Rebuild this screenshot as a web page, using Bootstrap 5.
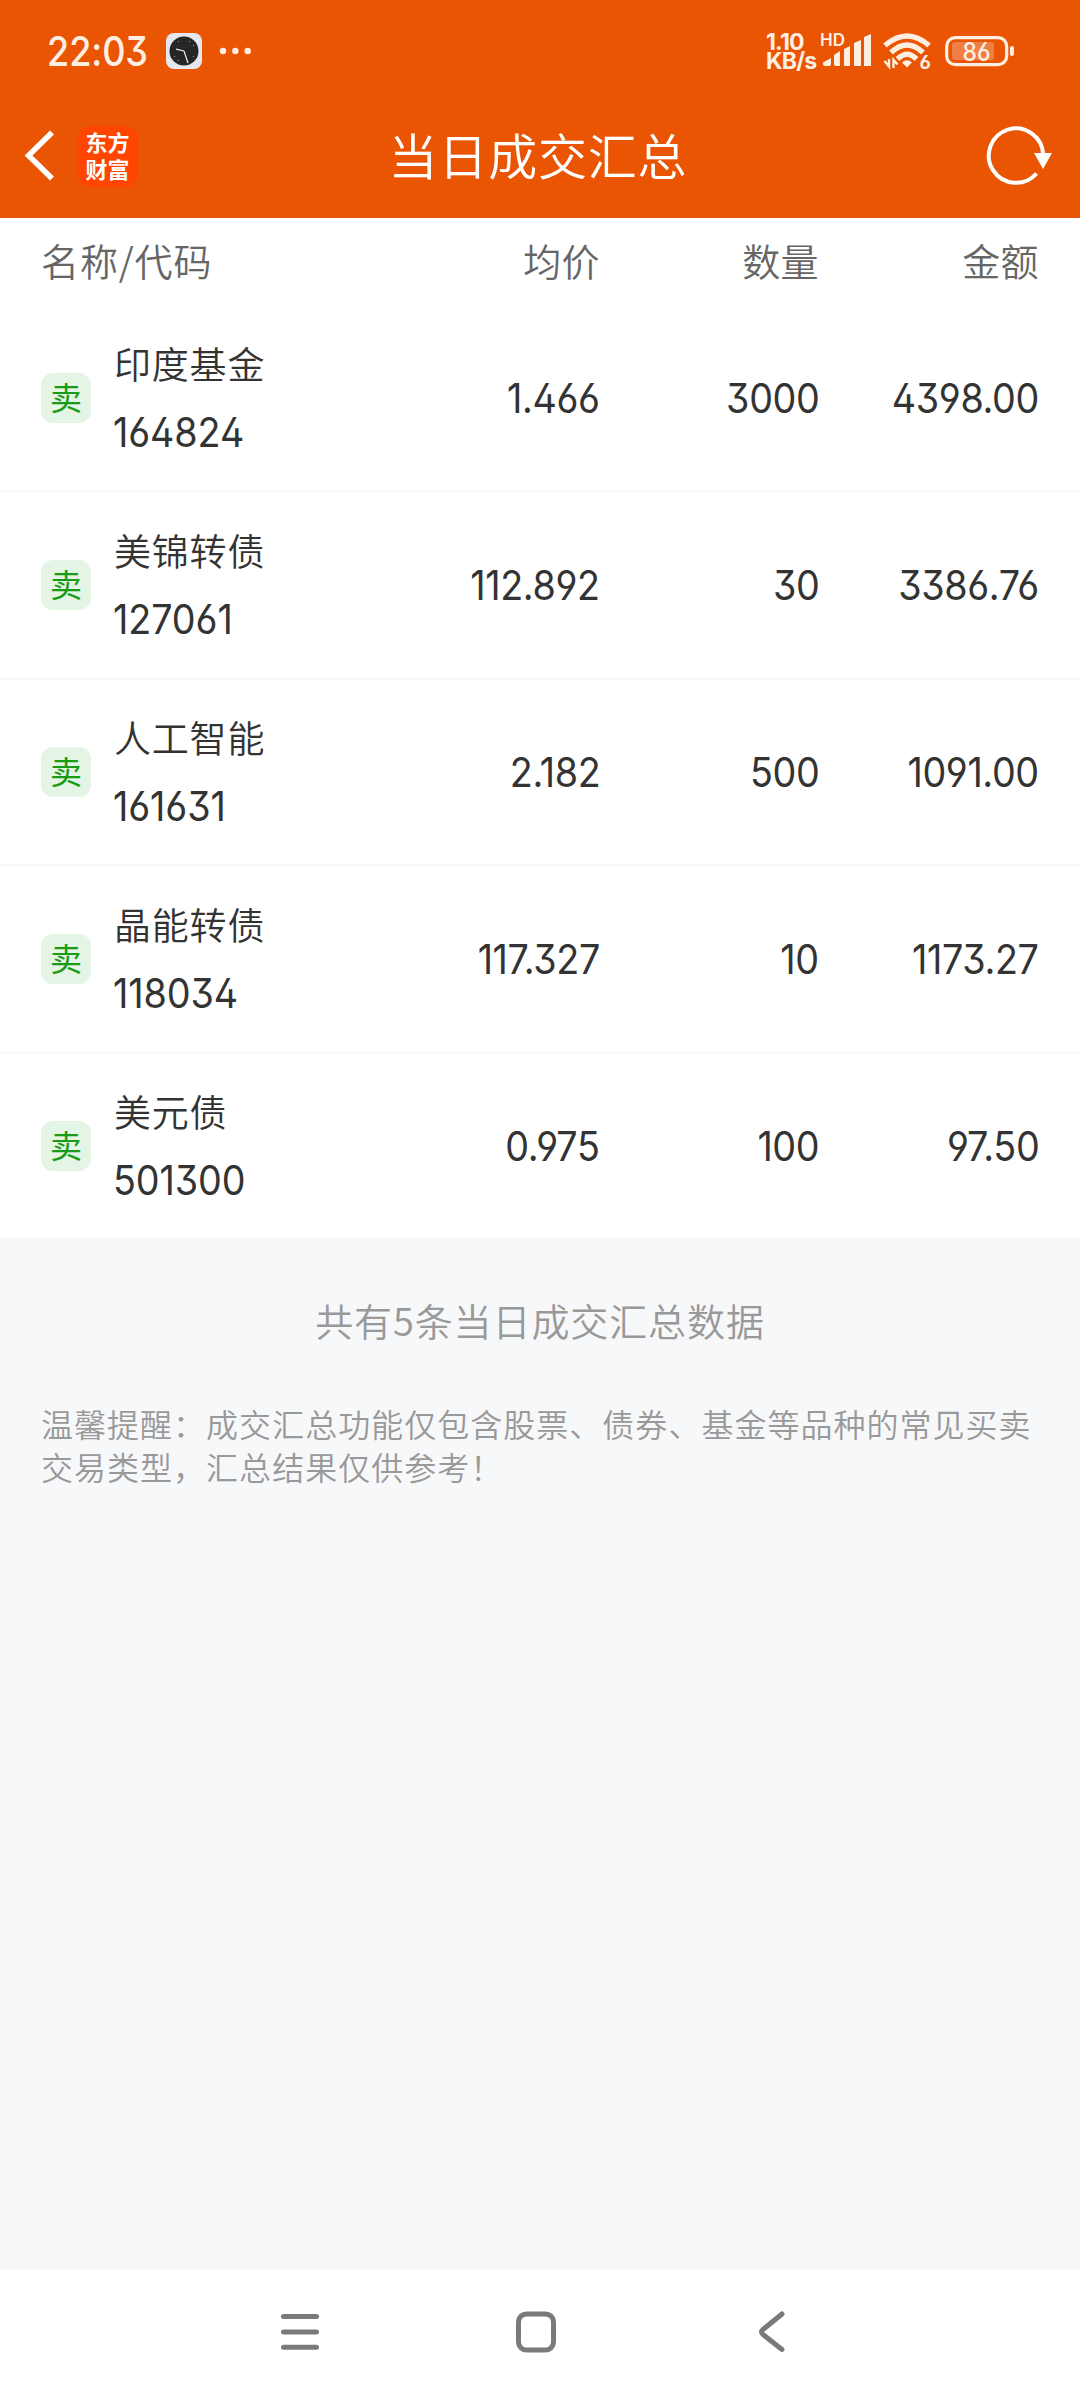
<!DOCTYPE html>
<html lang="zh-CN">
<head>
<meta charset="utf-8">
<meta name="viewport" content="width=device-width, initial-scale=1">
<title>当日成交汇总</title>
<link href="https://cdn.jsdelivr.net/npm/bootstrap@5.3.0/dist/css/bootstrap.min.css" rel="stylesheet">
<style>
  body { font-family: Inter, "Noto Sans CJK SC", sans-serif; font-feature-settings: "ss01", "cv09"; background: #f7f8fa; color: #333; height: 2400px; }
  .cjk { font-family: "Noto Sans CJK SC", sans-serif; font-weight: 350; }
  .app-head { background: #ea5504; height: 218px; color: #fff; }
  .status-bar { height: 102px; padding: 0 64px 0 47px; color: #ffeee2; }
  .clock-text { font-size: 41px; line-height: 60px; font-weight: 500; width: 98px; }
  .squeeze { display: inline-block; transform: scaleX(.92); transform-origin: 0 50%; letter-spacing: -.1px; white-space: nowrap; }
  .squeeze-end { transform-origin: 100% 50%; letter-spacing: -.4px; }
  .clock-text .squeeze { transform: scaleX(.88); }
  .clock-app { margin-left: 21px; }
  .net-speed { font-size: 23px; font-weight: 700; line-height: 19px; width: 54px; padding-top: 2px; }
  .net-speed div { letter-spacing: -.8px; }
  .battery { margin-left: 12px; }
  .title-bar { height: 116px; padding: 0 28px 8px 24px; }
  .page-title { font-size: 49px; letter-spacing: .8px; line-height: 60px; padding-bottom: 5px; }
  .brand-mark { width: 61px; height: 61px; margin-left: 21px; padding-bottom: 3px; border-radius: 14px; background: #ff4500; font-family: "Noto Sans CJK SC", sans-serif; font-size: 22px; font-weight: 700; line-height: 27px; }
  .side { width: 120px; }
  .cols { display: grid; grid-template-columns: 360px 199px 219px 220px; padding: 0 41px; align-items: center; }
  .cols-head { height: 88px; font-size: 38px; color: #666; letter-spacing: .4px; padding-bottom: 6px; }
  .cols-head div:first-child { letter-spacing: .9px; }
  .deal { height: 187px; border-bottom: 3px solid #f8f9f9; font-size: 41px; }
  .deal:last-child { height: 184px; border-bottom: 0; }
  .deal > .text-end { padding-top: 2px; }
  .deal-name { font-size: 37px; letter-spacing: .8px; line-height: 64px; padding-bottom: 3px; }
  .deal-code { line-height: 66px; padding-top: 1px; margin-left: -1px; }
  .sell-tag { width: 50px; height: 50px; border-radius: 12px; background: #e4f5e5; color: #189c18; font-size: 32px; font-weight: 400; line-height: 46px; margin-right: 23px; }
  .summary { margin-top: 52px; font-size: 38px; letter-spacing: .9px; line-height: 60px; color: #999; }
  .tip { margin: 52px 38px 0 41px; font-size: 32px; letter-spacing: 1.02px; line-height: 43px; color: #999; }
  .nav-keys { height: 130px; }
  .nav-keys svg { margin-left: -14px; margin-bottom: 6px; }
</style>
</head>
<body class="d-flex flex-column m-0">
<header class="app-head">
  <div class="status-bar d-flex align-items-center">
    <div class="clock-text"><span class="squeeze">22:03</span></div>
    <svg class="clock-app" width="36" height="36" viewBox="0 0 36 36">
      <rect width="36" height="36" rx="8" fill="#e4e7ee"/>
      <circle cx="18" cy="18" r="14.5" fill="#262626"/>
      <path d="M18 18 10 16.2M18 18 22 30" stroke="#eee" stroke-width="1.2" fill="none"/>
      <g fill="#aaa"><circle cx="12.5" cy="8.500" r=".6"/><circle cx="23.500" cy="8.500" r=".6"/><circle cx="27.500" cy="12.500" r=".6"/><circle cx="27.500" cy="23.500" r=".6"/><circle cx="8.500" cy="23.500" r=".6"/><circle cx="12.500" cy="27.500" r=".6"/></g>
    </svg>
    <svg class="ms-3" width="36" height="10" viewBox="0 0 36 10" fill="currentColor"><circle cx="5" cy="5" r="3.2"/><circle cx="17.3" cy="5" r="3.2"/><circle cx="29.7" cy="5" r="3.2"/></svg>
    <div class="net-speed ms-auto"><div>1.10</div><div>KB/s</div></div>
    <svg width="52" height="40" viewBox="820 32 52 40" fill="currentColor">
      <text x="820" y="47" font-size="17" font-weight="600" textLength="25">HD</text>
      <path d="M823 63.500 831 59V65q0 2-2 2H825q-2 0-2-2ZM834 56 840 52V67H836q-2 0-2-2ZM844 50 850 47V67H844ZM854 44 861 41V67H854ZM864 38 871 35V67H864Z"/>
    </svg>
    <svg class="ms-2" width="52" height="40" viewBox="880 32 52 40" fill="none" stroke="currentColor" stroke-width="5.400">
      <path d="M885 46.500Q907 27.500 929 46.500M891 53.500Q907 38.500 923 53.500M897.500 60Q907 50.500 916.500 60"/>
      <path d="M902 63.500Q907 59 912 63.500L907 68.500Z" fill="currentColor" stroke="none"/>
      <path d="M884.500 62 889 67.500V60M893.500 69V61L897.500 65.500" stroke-width="2.400"/>
      <text x="919.500" y="69.500" font-size="18.500" font-weight="700" fill="currentColor" stroke="none">6</text>
    </svg>
    <svg class="battery" width="72" height="34" viewBox="944 34 72 34">
      <rect x="946.700" y="37.700" width="60" height="27" rx="8.500" fill="none" stroke="currentColor" stroke-width="3.200"/>
      <rect x="952" y="42" width="42" height="18" rx="3" fill="#fff" opacity=".25"/>
      <rect x="1010" y="46" width="4" height="10" rx="2" fill="currentColor"/>
      <text x="962.500" y="60.500" font-size="25" font-weight="500" fill="currentColor" textLength="28" lengthAdjust="spacingAndGlyphs">86</text>
    </svg>
  </div>
  <div class="title-bar d-flex align-items-center justify-content-between">
    <div class="side d-flex align-items-center">
      <svg width="32" height="54" viewBox="0 1 32 54"><path d="M28 4.500 4.500 27.500 28 50.500" fill="none" stroke="#fff" stroke-width="5.500"/></svg>
      <div class="brand-mark d-flex flex-column align-items-center justify-content-center"><div>东方</div><div>财富</div></div>
    </div>
    <div class="page-title cjk">当日成交汇总</div>
    <div class="side text-end">
      <svg width="66" height="60" viewBox="986 126 66 60"><path d="M1036.500 173.500A27.200 27.200 0 1 1 1043.200 155" fill="none" stroke="#fff" stroke-width="4"/><path d="M1034 153H1052L1043 169Z" fill="#fff"/></svg>
    </div>
  </div>
</header>

<main class="flex-grow-1">
  <section class="bg-white">
    <div class="cols cols-head cjk">
      <div>名称/代码</div><div class="text-end">均价</div><div class="text-end">数量</div><div class="text-end">金额</div>
    </div>
    <div>
      <div class="cols deal">
        <div class="d-flex align-items-center"><span class="sell-tag cjk text-center">卖</span><div><div class="deal-name cjk">印度基金</div><div class="deal-code"><span class="squeeze">164824</span></div></div></div>
        <div class="text-end"><span class="squeeze squeeze-end">1.466</span></div><div class="text-end"><span class="squeeze squeeze-end">3000</span></div><div class="text-end"><span class="squeeze squeeze-end">4398.00</span></div>
      </div>
      <div class="cols deal">
        <div class="d-flex align-items-center"><span class="sell-tag cjk text-center">卖</span><div><div class="deal-name cjk">美锦转债</div><div class="deal-code"><span class="squeeze">127061</span></div></div></div>
        <div class="text-end"><span class="squeeze squeeze-end">112.892</span></div><div class="text-end"><span class="squeeze squeeze-end">30</span></div><div class="text-end"><span class="squeeze squeeze-end">3386.76</span></div>
      </div>
      <div class="cols deal">
        <div class="d-flex align-items-center"><span class="sell-tag cjk text-center">卖</span><div><div class="deal-name cjk">人工智能</div><div class="deal-code"><span class="squeeze">161631</span></div></div></div>
        <div class="text-end"><span class="squeeze squeeze-end">2.182</span></div><div class="text-end"><span class="squeeze squeeze-end">500</span></div><div class="text-end"><span class="squeeze squeeze-end">1091.00</span></div>
      </div>
      <div class="cols deal">
        <div class="d-flex align-items-center"><span class="sell-tag cjk text-center">卖</span><div><div class="deal-name cjk">晶能转债</div><div class="deal-code"><span class="squeeze">118034</span></div></div></div>
        <div class="text-end"><span class="squeeze squeeze-end">117.327</span></div><div class="text-end"><span class="squeeze squeeze-end">10</span></div><div class="text-end"><span class="squeeze squeeze-end">1173.27</span></div>
      </div>
      <div class="cols deal">
        <div class="d-flex align-items-center"><span class="sell-tag cjk text-center">卖</span><div><div class="deal-name cjk">美元债</div><div class="deal-code"><span class="squeeze">501300</span></div></div></div>
        <div class="text-end"><span class="squeeze squeeze-end">0.975</span></div><div class="text-end"><span class="squeeze squeeze-end">100</span></div><div class="text-end"><span class="squeeze squeeze-end">97.50</span></div>
      </div>
    </div>
  </section>
  <div class="summary cjk text-center">共有5条当日成交汇总数据</div>
  <p class="tip cjk">温馨提醒：成交汇总功能仅包含股票、债券、基金等品种的常见买卖交易类型，汇总结果仅供参考！</p>
</main>

<nav class="nav-keys bg-white d-flex justify-content-center align-items-center">
  <svg width="510" height="50" viewBox="278 2307 510 50" fill="none" stroke="#7a7a7a" stroke-width="5" stroke-linecap="round">
    <path d="M283.500 2316.500H316.500M283.500 2332H316.500M283.500 2347.300H316.500"/>
    <rect x="518.500" y="2314" width="35" height="36" rx="8"/>
    <path d="M782 2314 763 2329.500Q760 2332 763 2334.500L782 2349.500"/>
  </svg>
</nav>
<script src="https://cdn.jsdelivr.net/npm/bootstrap@5.3.0/dist/js/bootstrap.bundle.min.js"></script>
</body>
</html>
